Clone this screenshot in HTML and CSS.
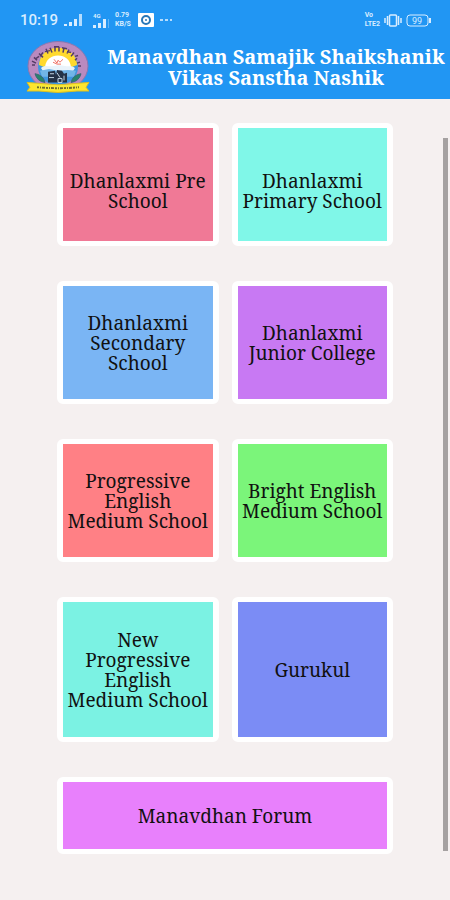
FILE: index.html
```html
<!DOCTYPE html>
<html lang="en">
<head>
<meta charset="utf-8">
<meta name="viewport" content="width=device-width, initial-scale=1">
<title>Manavdhan Samajik Shaikshanik Vikas Sanstha Nashik</title>
<link rel="stylesheet" href="styles.css">
</head>
<body>
<div class="status">
  <span class="clock">10:19</span>
  <svg class="signal" width="20" height="14" viewBox="0 0 20 14" aria-hidden="true">
    <path d="M1 11h3v2H1zM6 9h3v4H6zM11 6h3v7h-3z"/><path opacity=".8" d="M16 1h3v12h-3z"/>
  </svg>
  <span class="network">
    <span class="tiny">4G</span>
    <svg width="16" height="9" viewBox="0 0 16 9" aria-hidden="true"><path d="M0 6h3v3H0zM5 4h3v5H5zM10 0h3v9h-3z"/><path opacity=".35" d="M15 0h1v9h-1z"/></svg>
  </span>
  <span class="stack rate"><span>0.79</span><span>KB/S</span></span>
  <svg class="notice" width="16" height="14" viewBox="0 0 16 14" aria-hidden="true">
    <rect width="16" height="14" rx="1" fill="#fff"/><circle cx="8" cy="7" r="4" fill="none" stroke="#2878b8" stroke-width="2"/><circle cx="8" cy="7" r="1" fill="#2878b8"/>
  </svg>
  <svg class="dots" width="14" height="4" viewBox="0 0 14 4" aria-hidden="true"><path opacity=".8" d="M1 1h3v2H1zM6 1h3v2H6zM11 1h2v2h-2z"/></svg>
  <span class="right">
    <span class="stack"><span>Vo</span><span>LTE2</span></span>
    <svg width="18" height="13" viewBox="0 0 18 13" aria-hidden="true">
      <g fill="none" stroke="#d9edff" stroke-width="1.5"><rect x="5.500" y="1" width="7" height="11" rx="1"/><path d="M3.500 2v9M1 4v5M14.500 2v9M17 4v5"/></g>
    </svg>
    <svg width="26" height="13" viewBox="0 0 26 13" aria-hidden="true">
      <rect x="1" y="1" width="21" height="11" rx="3" fill="none" stroke="#d9edff"/><path d="M23 4h2v5h-2z"/>
      <text x="11" y="10" text-anchor="middle" class="charge">99</text>
    </svg>
  </span>
</div>
<header class="bar">
  <svg class="logo" width="64" height="52" viewBox="0 0 64 54" preserveAspectRatio="none" role="img" aria-label="Manavdhan emblem">
    <ellipse cx="32" cy="26" rx="30" ry="25.500" fill="#b98abf" stroke="#8c75ad"/>
    <ellipse cx="32" cy="27" rx="20" ry="19" fill="#3f97df"/>
    <path d="M13 25a19 18 0 0 1 38 0l-5 2H18z" fill="#ffd92e"/>
    <path d="M19 27c1-8 6-12 13-12s12 4 13 12z" fill="#fff"/>
    <path d="M15 28c4-4 8-1 12-2s8-1 12 0 6-1 10 2l-3 5H18z" fill="#e9f3fb"/>
    <path d="M14 31l9-2 9 2 10-1 8 1-2 6H16z" fill="#71b5e7"/>
    <path d="M28 19l3 4 1-3 2 2 3-3M27 22l4 2h4" fill="none" stroke="#ef7065"/>
    <g fill="none" stroke="#553c66" stroke-width="1.500">
      <path d="M6 25h3M6 21l4 2M8 17l3 3M9 19l4-3M13 13l4 4M14 16l3-4M20 8l2 5M19 11l5-1M24 7l2 5M29 6v5M28 6h5M33 6v5M38 7l-1 5M36 7l5 1M43 9l-2 4M41 11l4 1M48 12l-3 4M49 16l3-1M51 18l-2 2M54 22l-3 1M55 26h-3"/>
    </g>
    <path d="M9 34q8 1 10 9-8-1-10-9zM55 34q-8 1-10 9 8-1 10-9z" fill="#27846d" stroke="#376778"/>
    <path d="M22 32l7-1 1 4 1-5 5 1 2 3 3-1v10H22z" fill="#243246"/>
    <path d="M24 34h4M31 33l3 5M23 38h5M32 39h4v4h-4zM38 36v5" fill="none" stroke="#c5d6e4"/>
    <path d="M1 43l12 1q19 3 38 0l12-1-3 5 3 4H51q-19 3-38 0H1l3-4z" fill="#ffe52d" stroke="#d8bd24"/>
    <path d="M10 45q22 3 44 0v5q-22 3-44 0z" fill="#f8e936"/>
    <path d="M11 48q21 2 42 0" fill="none" stroke="#706d30" stroke-width="2" stroke-dasharray="2 1 1 1 3 1"/>
  </svg>
  <h1>Manavdhan Samajik Shaikshanik Vikas Sanstha Nashik</h1>
</header>
<main>
  <nav class="grid" aria-label="Schools">
    <button class="card first pink">Dhanlaxmi Pre School</button>
    <button class="card first aqua">Dhanlaxmi Primary School</button>
    <button class="card sky">Dhanlaxmi Secondary School</button>
    <button class="card purple">Dhanlaxmi Junior College</button>
    <button class="card coral">Progressive English Medium School</button>
    <button class="card green">Bright English Medium School</button>
    <button class="card mint tall">New Progressive English Medium School</button>
    <button class="card indigo tall">Gurukul</button>
    <button class="card violet wide">Manavdhan Forum</button>
  </nav>
  <div class="scrollbar"></div>
</main>
</body>
</html>
```
FILE: styles.css
```css
* { box-sizing: border-box; }
body {
  margin: 0;
  min-height: 100vh;
  background: #f5f0f0;
  font-family: "Noto Serif", "DejaVu Serif", serif;
}
.status {
  display: flex;
  align-items: center;
  height: 40px;
  padding: 0 18px 0 20px;
  background: #2196f3;
  color: #d9edff;
  font-family: Roboto, sans-serif;
}
.status svg { fill: #d9edff; flex: none; }
.clock { font-size: 15px; font-weight: 500; width: 43px; }
.signal { margin-right: 10px; }
.network { display: flex; flex-direction: column; width: 22px; }
.tiny { font-size: 6px; line-height: 6px; font-weight: 700; }
.stack {
  display: flex;
  flex-direction: column;
  font-size: 7px;
  line-height: 9px;
  font-weight: 700;
}
.rate { width: 23px; }
.notice { margin-right: 5px; }
.right { display: flex; align-items: center; gap: 4px; margin-left: auto; }
.charge { font-size: 9px; }
.bar {
  display: flex;
  align-items: center;
  gap: 14px;
  height: 59px;
  padding: 0 2px 6px 26px;
  background: #2196f3;
  color: #fff;
}
.logo { flex: none; }
h1 {
  flex: 1;
  margin: 0;
  font-size: 20px;
  line-height: 21px;
  font-weight: 700;
  text-align: center;
}
main { position: relative; padding: 24px 57px 47px; }
.grid {
  display: grid;
  grid-template-columns: 1fr 1fr;
  gap: 35px 13px;
}
.card {
  min-height: 123px;
  padding: 0 3px;
  border: solid #fff;
  border-width: 5px 6px;
  border-radius: 6px;
  color: #111;
  font: 19px/20px "Noto Serif", "DejaVu Serif", serif;
  text-align: center;
}
.first { padding-top: 12px; }
.tall { min-height: 145px; }
.wide { grid-column: 1 / -1; min-height: 77px; }
.pink { background-color: #f07996; }
.aqua { background-color: #80f7e8; }
.sky { background-color: #7ab5f4; }
.purple { background-color: #c879f3; }
.coral { background-color: #ff8085; }
.green { background-color: #7bf57a; }
.mint { background-color: #7bf2e3; }
.indigo { background-color: #7b8cf5; }
.violet { background-color: #e880fc; }
.scrollbar {
  position: absolute;
  top: 39px;
  right: 2px;
  bottom: 50px;
  width: 5px;
  background: #a5a1a1;
}
```
